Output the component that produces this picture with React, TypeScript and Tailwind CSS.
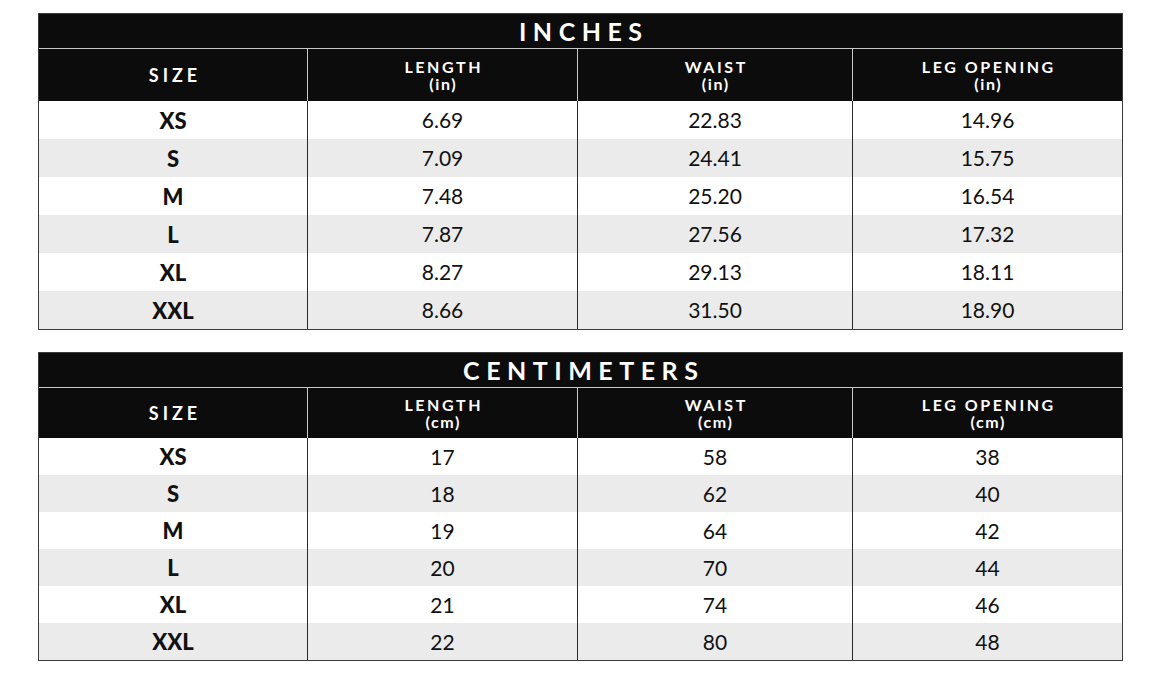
import React from "react";

type Row = [string, string, string, string];

const inches: Row[] = [
  ["XS", "6.69", "22.83", "14.96"],
  ["S", "7.09", "24.41", "15.75"],
  ["M", "7.48", "25.20", "16.54"],
  ["L", "7.87", "27.56", "17.32"],
  ["XL", "8.27", "29.13", "18.11"],
  ["XXL", "8.66", "31.50", "18.90"],
];

const cms: Row[] = [
  ["XS", "17", "58", "38"],
  ["S", "18", "62", "40"],
  ["M", "19", "64", "42"],
  ["L", "20", "70", "44"],
  ["XL", "21", "74", "46"],
  ["XXL", "22", "80", "48"],
];

const font = { fontFamily: "Lato, 'Open Sans', sans-serif" };

function Table({
  title,
  unit,
  rows,
  rowH,
  headH,
}: {
  title: string;
  unit: string;
  rows: Row[];
  rowH: "h-[38px]" | "h-[37px]";
  headH: "h-[52px]" | "h-[50px]";
}) {
  const cols = "grid grid-cols-[268px_270px_275px_1fr]";
  const heads = ["LENGTH", "WAIST", "LEG OPENING"];
  return (
    <div className="w-[1085px] border border-[#3a3a3a] bg-white">
      <div className="h-[35px] bg-[#0c0c0c] flex items-center justify-center border-b border-[#c8c8c8]">
        <span className="text-white font-bold text-[25px] tracking-[0.26em] pl-[0.26em] leading-none">{title}</span>
      </div>
      <div className={`${cols} ${headH} bg-[#0c0c0c]`}>
        <div className="flex items-center justify-center">
          <span className="text-white font-bold text-[18px] tracking-[0.22em] pl-[0.22em]">SIZE</span>
        </div>
        {heads.map((h) => (
          <div key={h} className="flex flex-col items-center justify-center border-l border-[#c8c8c8]">
            <span className="text-white font-bold text-[16px] tracking-[0.16em] pl-[0.16em] leading-[17px]">{h}</span>
            <span className="text-white font-bold text-[16px] tracking-[0.1em] pl-[0.1em] leading-[17px]">({unit})</span>
          </div>
        ))}
      </div>
      {rows.map((r, i) => (
        <div key={r[0]} className={`${cols} ${rowH} ${i % 2 === 1 ? "bg-[#ebebeb]" : "bg-white"}`}>
          <div className="flex items-center justify-center text-[22px] font-black text-[#111]">{r[0]}</div>
          <div className="flex items-center justify-center text-[21px] text-[#111] border-l border-[#2a2a2a]">{r[1]}</div>
          <div className="flex items-center justify-center text-[21px] text-[#111] border-l border-[#2a2a2a]">{r[2]}</div>
          <div className="flex items-center justify-center text-[21px] text-[#111] border-l border-[#2a2a2a]">{r[3]}</div>
        </div>
      ))}
    </div>
  );
}

export default function App() {
  return (
    <div className="w-[1159px] h-[677px] bg-white pt-[13px] pl-[38px] flex flex-col gap-[22px]" style={font}>
      <Table title="INCHES" unit="in" rows={inches} rowH="h-[38px]" headH="h-[52px]" />
      <Table title="CENTIMETERS" unit="cm" rows={cms} rowH="h-[37px]" headH="h-[50px]" />
    </div>
  );
}
